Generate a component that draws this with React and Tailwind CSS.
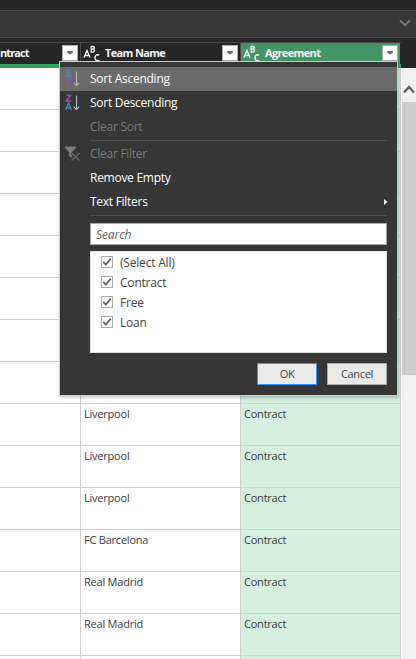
import React from "react";

const rows = ["", "", "", "", "", "", "", "", "Liverpool", "Liverpool", "Liverpool", "FC Barcelona", "Real Madrid", "Real Madrid", ""];

function TypeIcon() {
  return (
    <svg width="18" height="18" viewBox="0 0 18 18" fill="none" stroke="#f4f4f4" strokeWidth="1.4" className="shrink-0">
      <path d="M1 12.500 4 5.500l3 7M2 10.500h4" />
      <path d="M8.200 1.500v5.600h2.200a1.600 1.600 0 0 0 0-3H8.200h1.900a1.300 1.300 0 0 0 0-2.600z" strokeWidth="1.300" />
      <path d="M16.300 10.200c-2.400-1.200-4.300.2-4.300 2.600s1.900 3.700 4.300 2.500" />
    </svg>
  );
}

function DropButton() {
  return (
    <div className="flex h-4 w-4 shrink-0 items-center justify-center border border-[#ababab] bg-white">
      <svg width="8" height="4" viewBox="0 0 8 4" className="mt-[-1px]"><path d="M1 0h6v1.200L4.600 3.300H3.400L1 1.200z" fill="#6a6a6a" /></svg>
    </div>
  );
}

function SortIcon({ top, bottom, topColor, bottomColor }) {
  const glyph = (letter, y, color) => (
    <path
      d={letter === "A" ? `M0.700 ${y + 6.700}L3.500 ${y}L6.300 ${y + 6.700}M1.500 ${y + 4.700}H5.500` : `M1 ${y + 0.500}H5.600L1 ${y + 6}H6`}
      stroke={color}
      strokeWidth="1.500"
    />
  );
  return (
    <svg width="16" height="18" viewBox="0 0 16 18" fill="none" className="mt-[-1px]">
      {glyph(top, 1, topColor)}
      {glyph(bottom, 9, bottomColor)}
      <path d="M11.500 1.500v14M8.800 12.800l2.700 2.700 2.700-2.700" stroke="#b4b4b4" strokeWidth="1.200" />
    </svg>
  );
}

function FilterIcon() {
  return (
    <svg width="16" height="16" viewBox="0 0 16 16" fill="none">
      <path d="M0 0.500h11v1.500L7 6V11.500L4 10V6L0 2z" fill="#7c7c7c" />
      <path d="M6.500 7l8 7.500M14.500 7l-8 7.500" stroke="#363636" strokeWidth="2.800" />
      <path d="M6.500 7l8 7.500M14.500 7l-8 7.500" stroke="#666" strokeWidth="1.400" />
    </svg>
  );
}

function MenuItem({ label, icon, disabled, active, arrow }) {
  return (
    <div className={`flex h-6 shrink-0 items-center pr-[9px] text-[12px] tracking-[-0.27px] ${active ? "bg-[#6a6a6a]" : ""} ${disabled ? "text-[#7c7c7c]" : "text-white"}`}>
      <div className="flex w-[30px] shrink-0 items-center pl-[5px]">{icon}</div>
      <span className="grow leading-[22px]">{label}</span>
      {arrow && <svg width="4" height="6" viewBox="0 0 4 6"><path d="M0 0l3.500 3L0 6z" fill="#fff" /></svg>}
    </div>
  );
}

function Divider() {
  return <div className="ml-[30px] mr-[10px] h-px shrink-0 bg-[#505050]" />;
}

function FilterMenu() {
  return (
    <div className="absolute left-[59px] top-[61px] flex h-[335px] w-[339px] flex-col border border-[#cacaca] bg-[#363636] pt-[5px] shadow-[1px_2px_3px_rgba(0,0,0,0.2)]">
      <MenuItem active label="Sort Ascending" icon={<SortIcon top="A" bottom="Z" topColor="#4383bd" bottomColor="#9250b4" />} />
      <MenuItem label="Sort Descending" icon={<SortIcon top="Z" bottom="A" topColor="#9250b4" bottomColor="#4383bd" />} />
      <MenuItem disabled label="Clear Sort" />
      <div className="h-px" />
      <Divider />
      <div className="h-px" />
      <MenuItem disabled label="Clear Filter" icon={<FilterIcon />} />
      <MenuItem label="Remove Empty" />
      <MenuItem arrow label="Text Filters" />
      <div className="h-px" />
      <Divider />
      <div className="ml-[30px] mr-[10px] mt-[7px] flex h-[22px] shrink-0 items-center border border-[#ababab] bg-white pl-[5px] pt-px text-[12px] italic tracking-[-0.1px] text-[#666]">Search</div>
      <div className="ml-[30px] mr-[10px] mt-1.5 h-[102px] shrink-0 border border-[#e0e0e0] bg-white pl-[10px]">
        {["(Select All)", "Contract", "Free", "Loan"].map((name) => (
          <div key={name} className="flex h-5 items-center text-[12px] tracking-[-0.2px] text-[#444]">
            <span className="flex h-3 w-3 items-center justify-center border border-[#ababab] bg-white">
              <svg width="10" height="10" viewBox="0 0 10 10" fill="none"><path d="M1.200 4.800 3.900 7.600 8.800 1.700" stroke="#666" strokeWidth="1.800" /></svg>
            </span>
            <span className="pl-[7px] pt-0.5">{name}</span>
          </div>
        ))}
      </div>
      <div className="mr-[10px] mt-[10px] flex justify-end gap-[10px] text-[11px] tracking-[-0.3px] text-[#444]">
        <div className="flex h-[22px] w-[60px] items-center justify-center border border-[#2f96ff] bg-[#eaeaea]">OK</div>
        <div className="flex h-[22px] w-[60px] items-center justify-center border border-[#ababab] bg-[#eaeaea]">Cancel</div>
      </div>
    </div>
  );
}

export default function App() {
  return (
    <div className="relative flex h-[659px] w-[416px] flex-col overflow-hidden bg-[#262626] font-['Open_Sans','Noto_Sans',sans-serif]">
      <div className="mt-[10px] flex h-7 shrink-0 items-center justify-end border-y border-[#484848] bg-[#383838] pr-[5px]">
        <svg width="12" height="8" viewBox="0 0 12 8" fill="none" className="mt-[-2px]"><path d="M1 1.200l5 5 5-5" stroke="#777" strokeWidth="2" /></svg>
      </div>
      <div className="mt-1 flex h-[22px] w-[401px] shrink-0 border-t border-[#484848] text-[11px] font-bold tracking-[-0.65px] text-[#f4f4f4]">
        <div className="flex w-[81px] items-start justify-between border-r border-[#484848] pr-0.5 pt-0.5">
          <span className="w-[26px] text-right leading-4 tracking-[-0.9px]">ntract</span>
          <DropButton />
        </div>
        <div className="flex w-[160px] items-start border-r border-[#484848] pl-0.5 pr-0.5 pt-0.5">
          <TypeIcon />
          <span className="grow pl-1 leading-4">Team Name</span>
          <DropButton />
        </div>
        <div className="flex w-[160px] items-start border-r border-[#262626] bg-[#439467] pl-0.5 pr-0.5 pt-0.5">
          <TypeIcon />
          <span className="grow pl-1 leading-4">Agreement</span>
          <DropButton />
        </div>
      </div>
      <div className="h-1 w-[401px] shrink-0 bg-[#33a55e]" />
      <div className="flex min-h-0 grow bg-white">
        <div className="w-[401px] shrink-0 overflow-hidden text-[11px] leading-4 tracking-[-0.22px] text-[#3c3c3c]">
          {rows.map((team, i) => (
            <div key={i} className="flex h-[42px]">
              <div className="w-[81px] border-b border-r border-[#d0d0d0]" />
              <div className="w-[160px] border-b border-r border-[#d0d0d0] pl-[3px] pt-0.5">{team}</div>
              <div className="w-[160px] border-b border-r border-[#d0d0d0] bg-[#d4efe0] pl-[3px] pt-0.5">{team && "Contract"}</div>
            </div>
          ))}
        </div>
        <div className="ml-px w-[14px] bg-[#f0f0f0]">
          <div className="flex h-[34px] items-center justify-center">
            <svg width="12" height="9" viewBox="0 0 12 9" fill="none" className="mt-2"><path d="M1 7.500l5-5.500 5 5.500" stroke="#606060" strokeWidth="2.400" /></svg>
          </div>
          <div className="h-[273px] bg-[#cdcdcd]" />
        </div>
      </div>
      <FilterMenu />
    </div>
  );
}
